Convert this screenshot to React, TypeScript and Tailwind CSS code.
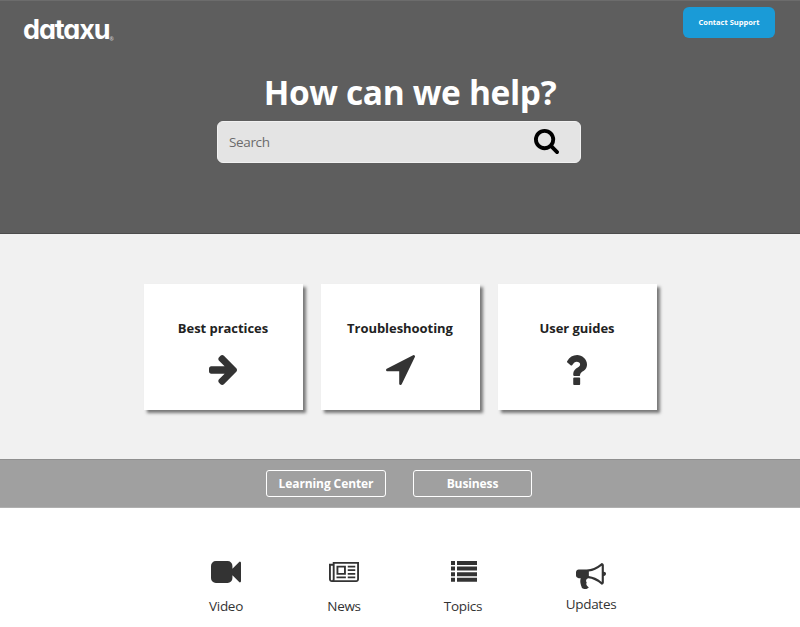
import type { ReactNode } from "react";

type IconProps = { box: string; className: string; children: ReactNode };

function Icon({ box, className, children }: IconProps) {
  return (
    <svg viewBox={box} preserveAspectRatio="none" fill="currentColor" className={`block shrink-0 ${className}`} aria-hidden="true">
      {children}
    </svg>
  );
}

const cards = [
  {
    title: "Best practices",
    icon: (
      <Icon box="128 181 1472 1558" className="mr-[1px] h-[30px] w-[28px]">
        <path d="M1600 960q0 54-37 91l-651 651q-39 37-91 37-51 0-90-37l-75-75q-38-38-38-91t38-91l293-293h-704q-52 0-84.500-37.500t-32.500-90.500v-128q0-53 32.500-90.500t84.500-37.500h704l-293-294q-38-36-38-90t38-90l75-75q38-38 90-38 53 0 91 38l651 651q37 35 37 90z" />
      </Icon>
    ),
  },
  {
    title: "Troubleshooting",
    icon: (
      <Icon box="190 256 1410 1408" className="h-[30px] w-[29px]">
        <path d="M1593 349l-640 1280q-17 35-57 35-5 0-15-2-22-5-35.500-22.500t-13.500-39.500v-576h-576q-22 0-39.500-13.500t-22.500-35.500 4-42 29-30l1280-640q13-7 29-7 27 0 45 19 15 14 18.500 34.500t-6.500 39.500z" />
      </Icon>
    ),
  },
  {
    title: "User guides",
    icon: (
      <Icon box="387 256 1017 1280" className="mr-[3px] h-[30px] w-[22px]">
        <path d="M1088 1256v240q0 16-12 28t-28 12h-240q-16 0-28-12t-12-28v-240q0-16 12-28t28-12h240q16 0 28 12t12 28zm316-600q0 54-15.500 101t-35 76.500-55 59.500-57.500 43.500-61 35.500q-41 23-68.500 65t-27.500 67q0 17-12 32.500t-28 15.500h-240q-15 0-25.500-18.500t-10.500-37.500v-45q0-83 65-156.500t143-108.500q59-27 84-56t25-76q0-42-46.500-74t-107.500-32q-65 0-108 29-35 25-107 115-13 16-31 16-12 0-25-8l-164-125q-13-10-15.500-25t5.500-28q160-266 464-266 80 0 161 31t146 83 106 127.500 41 158.500z" />
      </Icon>
    ),
  },
];

const links = [
  {
    label: "Video",
    className: "w-[118px]",
    icon: (
      <Icon box="0 256 1792 1280" className="mt-[2px] h-[22px] w-[30px]">
        <path d="M1792 352v1088q0 42-39 59-13 5-25 5-27 0-45-19l-403-403v166q0 119-84.500 203.500t-203.500 84.500h-704q-119 0-203.500-84.500t-84.500-203.500v-704q0-119 84.500-203.500t203.500-84.500h704q119 0 203.500 84.500t84.500 203.500v165l403-402q18-19 45-19 12 0 25 5 39 17 39 59z" />
      </Icon>
    ),
  },
  {
    label: "News",
    className: "w-[118px]",
    icon: (
      <Icon box="0 128 2048 1408" className="mt-[3px] h-[20px] w-[30px]">
        <path d="M1024 512h-384v384h384v-384zm128 640v128h-640v-128h640zm0-768v640h-640v-640h640zm640 768v128h-512v-128h512zm0-256v128h-512v-128h512zm0-256v128h-512v-128h512zm0-256v128h-512v-128h512zm-1536 960v-960h-128v960q0 26 19 45t45 19 45-19 19-45zm1664 0v-1088h-1536v1088q0 33-11 64h1483q26 0 45-19t19-45zm128-1216v1216q0 80-56 136t-136 56h-1664q-80 0-136-56t-56-136v-1088h256v-128h1792z" />
      </Icon>
    ),
  },
  {
    label: "Topics",
    className: "w-[120px]",
    icon: (
      <Icon box="0 0 26 21" className="ml-[1px] mt-[2px] h-[21px] w-[26px]">
        <path d="M0 0h4v4H0zM6 0h20v4H6zM0 5.600h4v4H0zM6 5.600h20v4H6zM0 11.200h4v4H0zM6 11.200h20v4H6zM0 16.700h4v4H0zM6 16.700h20v4H6z" />
      </Icon>
    ),
  },
  {
    label: "Updates",
    className: "w-[136px] -mt-0.5",
    icon: (
      <Icon box="0 128 1792 1536" className="mt-[6px] h-[26px] w-[30px]">
        <path d="M1664 640q53 0 90.500 37.500t37.500 90.500-37.500 90.500-90.500 37.500v384q0 52-38 90t-90 38q-417-347-812-380-58 19-91 66t-31 100.500 40 92.500q-20 33-23 65.500t6 58 33.500 55 48 50 61.500 50.500q-29 58-111.500 83t-168.500 11.500-132-55.500q-7-23-29.500-87.500t-32-94.500-23-89-15-101 3.500-98.500 22-110.500h-122q-66 0-113-47t-47-113v-192q0-66 47-113t113-47h480q435 0 896-384 52 0 90 38t38 90v384zm-128 604v-954q-394 302-768 343v270q377 42 768 341z" />
      </Icon>
    ),
  },
];

export default function App() {
  return (
    <div className="h-[627px] w-[800px] overflow-hidden bg-white font-['Open_Sans',sans-serif] text-[#333]">
      <header className="h-[234px] border-t border-b border-t-[#6c6c6c] border-b-[#4c4c4c] bg-[#5e5e5e]">
        <div className="flex h-[62px] items-start justify-between pr-[25px] pl-[23px]">
          <div className="mt-[11px] flex items-end text-white">
            <span className="font-['Inter',sans-serif] text-[27px] leading-[36px] font-bold tracking-[-1.1px] [font-feature-settings:'cv11']">dataxu</span>
            <span className="mb-[6px] text-[5px] leading-[6px] font-bold text-[#ccc]">®</span>
          </div>
          <button className="mt-[6px] h-[31px] w-[92px] rounded-[6px] bg-[#1a9bd7] text-[7.5px] font-bold text-white">Contact Support</button>
        </div>
        <h1 className="pl-[20px] text-center text-[33.5px] leading-[58px] font-bold tracking-[-0.35px] text-white">How can we help?</h1>
        <div className="ml-[217px] flex h-[42px] w-[364px] items-center justify-between rounded-[6px] border border-[#f1f1f1] bg-[#e4e4e4] pr-[21px] pl-[11px]">
          <span className="text-[13.5px] leading-[20px] tracking-[-0.35px] text-[#6b6b6b]">Search</span>
          <Icon box="64 128 1664 1664" className="mb-[2px] h-[25px] w-[25px] text-black">
            <path d="M1216 832q0-185-131.500-316.500t-316.500-131.500-316.500 131.500-131.500 316.500 131.500 316.500 316.500 131.500 316.500-131.500 131.500-316.500zm512 832q0 52-38 90t-90 38q-54 0-90-38l-343-342q-179 124-399 124-143 0-273.500-55.500t-225-150-150-225-55.500-273.500 55.500-273.500 150-225 225-150 273.500-55.500 273.500 55.500 225 150 150 225 55.500 273.500q0 220-124 399l343 343q37 37 37 90z" />
          </Icon>
        </div>
      </header>
      <main className="flex h-[225px] gap-[18px] bg-[#f1f1f1] pt-[50px] pl-[144px]">
        {cards.map((card) => (
          <section key={card.title} className="flex h-[126px] w-[159px] flex-col items-center bg-white pt-[34px] shadow-[3px_3px_3px_#777]">
            <h2 className="pr-[1px] text-[13px] leading-[20px] font-bold tracking-[-0.05px] text-[#222]">{card.title}</h2>
            <div className="mt-[17px]">{card.icon}</div>
          </section>
        ))}
      </main>
      <nav className="flex h-[49px] gap-[27px] border-t border-b border-t-[#8f8f8f] border-b-[#b0b0b0] bg-[#a0a0a0] pt-[10px] pl-[266px] text-[12px] font-bold tracking-[-0.1px] text-white">
        <button className="h-[27px] w-[120px] rounded-[3px] border-[1.5px] border-white pt-[1px]">Learning Center</button>
        <button className="h-[27px] w-[119px] rounded-[3px] border-[1.5px] border-white pt-[1px]">Business</button>
      </nav>
      <footer className="flex pt-[51px] pl-[167px]">
        {links.map((link) => (
          <a key={link.label} className={`flex flex-col items-center ${link.className}`}>
            <div className="h-[37px]">{link.icon}</div>
            <span className="text-[13.5px] leading-[20px] tracking-[-0.3px]">{link.label}</span>
          </a>
        ))}
      </footer>
    </div>
  );
}
